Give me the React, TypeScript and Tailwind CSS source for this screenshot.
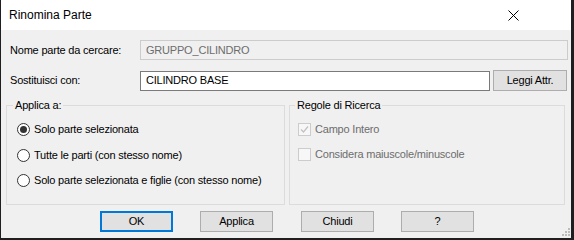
import type { ReactNode } from 'react';

const Radio = ({ checked, label, className }: { checked?: boolean; label: string; className?: string }) => (
  <label className={`flex h-[20px] items-center ${className ?? ''}`}>
    <span className="flex h-[13px] w-[13px] items-center justify-center rounded-full border border-[#333333] bg-white">
      {checked && <span className="h-[7px] w-[7px] rounded-full bg-[#333333]" />}
    </span>
    <span className="ml-[4px]">{label}</span>
  </label>
);

const Check = ({ checked, label, className }: { checked?: boolean; label: string; className?: string }) => (
  <label className={`flex h-[20px] items-center text-[#6d6d6d] ${className ?? ''}`}>
    <span className="flex h-[13px] w-[13px] items-center justify-center border border-[#cccccc] bg-[#f7f7f7]">
      {checked && (
        <svg width="9" height="9" viewBox="0 0 9 9">
          <path d="M1 4.5 L3.5 7 L8 1.5" stroke="#c2c2c2" strokeWidth="1.3" fill="none" />
        </svg>
      )}
    </span>
    <span className="ml-[4px]">{label}</span>
  </label>
);

const Group = ({ title, offset, className, children }: { title: string; offset: string; className: string; children: ReactNode }) => (
  <fieldset className={`h-[107px] border border-[#dcdcdc] ${className}`}>
    <legend className={`px-[2px] leading-[14px] ${offset}`}>{title}</legend>
    {children}
  </fieldset>
);

const Btn = ({ label, primary, className }: { label: string; primary?: boolean; className?: string }) => (
  <button
    type="button"
    className={`flex h-[21px] w-[73px] items-center justify-center bg-[#e1e1e1] ${
      primary ? 'border-2 border-[#0078d7]' : 'border border-[#adadad]'
    } ${className ?? ''}`}
  >
    {label}
  </button>
);

export default function App() {
  return (
    <div className="h-[240px] w-[574px] bg-[#1f1f1f] pl-px font-['Liberation_Sans',Arial,sans-serif] text-[11px] tracking-[-0.2px] text-black">
      <div className="relative flex h-[238px] w-[570px] flex-col bg-[#f0f0f0]">
        <div className="flex h-[30px] items-center justify-between bg-white pl-[8px]">
          <span className="text-[12px] tracking-normal">Rinomina Parte</span>
          <svg width="11" height="11" viewBox="0 0 11 11" className="mr-[52px]">
            <path d="M0.5 0.5 L10.5 10.5 M10.5 0.5 L0.5 10.5" stroke="#000" strokeWidth="1" />
          </svg>
        </div>

        <div className="mt-[10px] flex h-[20px] items-center">
          <span className="w-[139px] shrink-0 pl-[9px]">Nome parte da cercare:</span>
          <div className="flex h-[20px] w-[428px] items-center border border-[#cccccc] bg-[#f0f0f0] pl-[5px] text-[#6d6d6d]">
            GRUPPO_CILINDRO
          </div>
        </div>

        <div className="mt-[10px] flex h-[21px] items-center">
          <span className="w-[139px] shrink-0 pl-[9px]">Sostituisci con:</span>
          <div className="flex h-[20px] w-[350px] items-center border border-[#7a7a7a] bg-white pl-[5px]">
            CILINDRO BASE
          </div>
          <Btn label="Leggi Attr." className="ml-[3px] w-[74px]" />
        </div>

        <div className="mt-[7px] flex">
          <Group title="Applica a:" offset="ml-[6px]" className="ml-[5px] w-[279px]">
            <div className="pl-[10px] pt-[7px]">
              <Radio checked label="Solo parte selezionata" />
              <Radio label="Tutte le parti (con stesso nome)" className="mt-[6px]" />
              <Radio label="Solo parte selezionata e figlie (con stesso nome)" className="mt-[5px]" />
            </div>
          </Group>
          <Group title="Regole di Ricerca" offset="ml-[5px]" className="ml-[4px] w-[276px]">
            <div className="pl-[8px] pt-[7px]">
              <Check checked label="Campo Intero" />
              <Check label="Considera maiuscole/minuscole" className="mt-[5px]" />
            </div>
          </Group>
        </div>

        <div className="mt-[6px] flex">
          <Btn label="OK" primary className="ml-[99px]" />
          <Btn label="Applica" className="ml-[27px]" />
          <Btn label="Chiudi" className="ml-[28px]" />
          <Btn label="?" className="ml-[27px]" />
        </div>

        <svg width="8" height="8" viewBox="0 0 8 8" className="absolute bottom-[2px] right-[1px]">
          <rect x="6" y="0" width="2" height="2" fill="#bcbcbc" />
          <rect x="3" y="3" width="2" height="2" fill="#bcbcbc" />
          <rect x="6" y="3" width="2" height="2" fill="#bcbcbc" />
          <rect x="0" y="6" width="2" height="2" fill="#bcbcbc" />
          <rect x="3" y="6" width="2" height="2" fill="#bcbcbc" />
          <rect x="6" y="6" width="2" height="2" fill="#bcbcbc" />
        </svg>
      </div>
    </div>
  );
}
